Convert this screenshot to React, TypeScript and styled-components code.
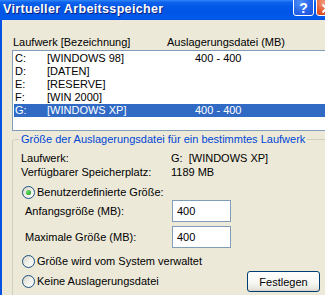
import React from "react";
import styled, { createGlobalStyle } from "styled-components";

const Global = createGlobalStyle`
  html, body { margin: 0; padding: 0; background: #ECE9D8; }
  body { font-family: "Liberation Sans", Arial, sans-serif; font-size: 11px; color: #000; }
`;

const Window = styled.div`
  width: 325px;
  height: 295px;
  overflow: hidden;
  background: #ECE9D8;
  display: flex;
  flex-direction: column;
`;

const TitleBar = styled.div`
  height: 20px;
  flex-shrink: 0;
  display: flex;
  align-items: flex-start;
  padding-left: 3px;
  background: linear-gradient(
    to bottom,
    #2F86FA 0%,
    #0F62EC 12%,
    #0058E8 35%,
    #0055E5 70%,
    #005CEE 90%,
    #0050DC 100%
  );
`;

const TitleText = styled.div`
  flex: 1;
  min-width: 0;
  font-family: "Liberation Sans", Arial, sans-serif;
  font-weight: bold;
  font-size: 12.5px;
  letter-spacing: 0.35px;
  line-height: 18px;
  color: #fff;
  text-shadow: 1px 1px 0 #0A1E7E;
  white-space: nowrap;
`;

const CaptionButton = styled.div<{ $variant: "help" | "close" }>`
  width: 21px;
  height: 21px;
  margin-top: -5px;
  margin-left: ${(p) => (p.$variant === "close" ? "2px" : "0")};
  margin-right: ${(p) => (p.$variant === "close" ? "-12px" : "0")};
  flex-shrink: 0;
  box-sizing: border-box;
  border: 1px solid #fff;
  border-radius: 3px;
  display: flex;
  align-items: center;
  justify-content: center;
  color: #fff;
  font-family: "Liberation Sans", Arial, sans-serif;
  font-weight: bold;
  font-size: 14px;
  padding-top: 5px;
  background: ${(p) =>
    p.$variant === "close"
      ? "radial-gradient(circle at 35% 35%, #F29B7E 0%, #E1572E 55%, #C8401C 100%)"
      : "radial-gradient(circle at 35% 35%, #4E8EF7 0%, #2866EA 55%, #1A4FD4 100%)"};
`;

const Body = styled.div`
  flex: 1;
  display: flex;
  flex-direction: column;
  align-items: flex-start;
  border-left: 2px solid #0653E2;
  padding: 16px 0 0 10px;
  min-height: 0;
`;

const ListHeader = styled.div`
  display: grid;
  grid-template-columns: 154px auto;
  line-height: 13px;
  padding-left: 1px;
  white-space: nowrap;
`;

const ListBox = styled.div`
  margin-top: 1px;
  width: 330px;
  height: 81px;
  flex-shrink: 0;
  box-sizing: border-box;
  border: 1px solid #7F9DB9;
  background: #fff;
  padding: 1px;
`;

const Row = styled.div<{ $selected?: boolean }>`
  display: grid;
  grid-template-columns: 32px 148px auto;
  height: 13px;
  line-height: 13px;
  padding-left: 1px;
  white-space: nowrap;
  background: ${(p) => (p.$selected ? "#316AC5" : "transparent")};
  color: ${(p) => (p.$selected ? "#fff" : "#000")};
`;

const Group = styled.fieldset`
  margin: 2px 0 0 0;
  width: 319px;
  min-width: 0;
  flex-shrink: 0;
  box-sizing: border-box;
  border: 1px solid #D0D0BF;
  border-radius: 3px;
  padding: 5px 10px 20px 8px;
`;

const Legend = styled.legend`
  color: #0046D5;
  padding: 0 2px;
  margin-left: -2px;
  line-height: 13px;
  white-space: nowrap;
`;

const InfoGrid = styled.div`
  display: grid;
  grid-template-columns: 150px auto;
  line-height: 14px;
  white-space: nowrap;
`;

const RadioRow = styled.div<{ $gap: number }>`
  display: flex;
  align-items: center;
  gap: 2px;
  margin-top: ${(p) => p.$gap}px;
  padding-left: 1px;
  line-height: 13px;
  white-space: nowrap;
`;

const RadioCircle = styled.span<{ $checked?: boolean }>`
  width: 13px;
  height: 13px;
  flex-shrink: 0;
  box-sizing: border-box;
  border: 1px solid #1C5180;
  border-radius: 50%;
  display: flex;
  align-items: center;
  justify-content: center;
  background: linear-gradient(135deg, #D5D2C4 0%, #EEEDE6 45%, #FFFFFF 100%);

  &::after {
    content: "";
    display: ${(p) => (p.$checked ? "block" : "none")};
    width: 5px;
    height: 5px;
    border-radius: 50%;
    background: radial-gradient(circle at 35% 35%, #7BE27A 0%, #2FB22F 55%, #1A8C1A 100%);
  }
`;

const SizeRow = styled.div<{ $gap: number }>`
  display: grid;
  grid-template-columns: 147px 59px;
  align-items: center;
  padding-left: 4px;
  margin-top: ${(p) => p.$gap}px;
  white-space: nowrap;
`;

const SizeInput = styled.input`
  width: 59px;
  height: 22px;
  box-sizing: border-box;
  border: 1px solid #7F9DB9;
  background: #fff;
  padding: 0 0 0 4px;
  margin: 0;
  font-family: "Liberation Sans", Arial, sans-serif;
  font-size: 11px;
  color: #000;
  outline: none;
`;

const LastRow = styled.div`
  display: flex;
  align-items: center;
  justify-content: space-between;
  margin-top: 3px;
`;

const Button = styled.button`
  width: 73px;
  height: 21px;
  box-sizing: border-box;
  border: 1px solid #003C74;
  border-radius: 3px;
  padding: 0;
  margin: 0;
  font-family: "Liberation Sans", Arial, sans-serif;
  font-size: 11px;
  color: #000;
  background: linear-gradient(to bottom, #FFFFFF 0%, #F6F6F2 60%, #E8E6DE 88%, #D8D3C6 100%);
`;

const drives = [
  { d: "C:", name: "[WINDOWS 98]", size: "400 - 400" },
  { d: "D:", name: "[DATEN]", size: "" },
  { d: "E:", name: "[RESERVE]", size: "" },
  { d: "F:", name: "[WIN 2000]", size: "" },
  { d: "G:", name: "[WINDOWS XP]", size: "400 - 400", selected: true },
];

export default function App() {
  return (
    <>
      <Global />
      <Window>
        <TitleBar>
          <TitleText>Virtueller Arbeitsspeicher</TitleText>
          <CaptionButton $variant="help">?</CaptionButton>
          <CaptionButton $variant="close">
            <svg width="11" height="11" viewBox="0 0 11 11">
              <path d="M1.5 1.5 L9.5 9.5 M9.5 1.5 L1.5 9.5" stroke="#fff" strokeWidth="2" />
            </svg>
          </CaptionButton>
        </TitleBar>
        <Body>
          <ListHeader>
            <span>Laufwerk [Bezeichnung]</span>
            <span>Auslagerungsdatei (MB)</span>
          </ListHeader>
          <ListBox>
            {drives.map((r) => (
              <Row key={r.d} $selected={r.selected}>
                <span>{r.d}</span>
                <span>{r.name}</span>
                <span>{r.size}</span>
              </Row>
            ))}
          </ListBox>
          <Group>
            <Legend>Größe der Auslagerungsdatei für ein bestimmtes Laufwerk</Legend>
            <InfoGrid>
              <span>Laufwerk:</span>
              <span>G:&nbsp;&nbsp;[WINDOWS XP]</span>
              <span>Verfügbarer Speicherplatz:</span>
              <span>1189 MB</span>
            </InfoGrid>
            <RadioRow $gap={7}>
              <RadioCircle $checked />
              <span>Benutzerdefinierte Größe:</span>
            </RadioRow>
            <SizeRow $gap={1}>
              <span>Anfangsgröße (MB):</span>
              <SizeInput readOnly defaultValue="400" />
            </SizeRow>
            <SizeRow $gap={4}>
              <span>Maximale Größe (MB):</span>
              <SizeInput readOnly defaultValue="400" />
            </SizeRow>
            <RadioRow $gap={7}>
              <RadioCircle />
              <span>Größe wird vom System verwaltet</span>
            </RadioRow>
            <LastRow>
              <RadioRow $gap={0}>
                <RadioCircle />
                <span>Keine Auslagerungsdatei</span>
              </RadioRow>
              <Button>Festlegen</Button>
            </LastRow>
          </Group>
        </Body>
      </Window>
    </>
  );
}
